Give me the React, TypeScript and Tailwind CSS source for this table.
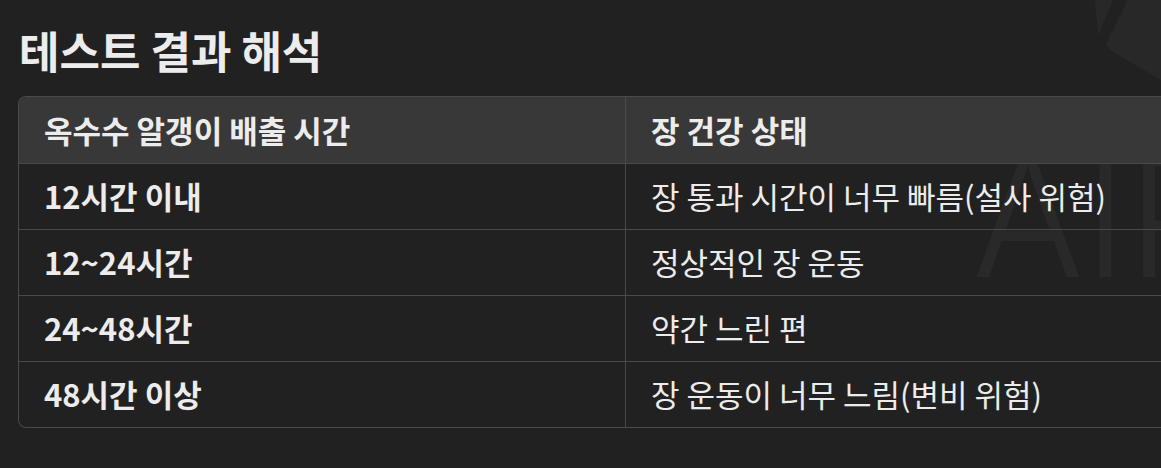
const rows = [
  ["12시간 이내", "장 통과 시간이 너무 빠름(설사 위험)"],
  ["12~24시간", "정상적인 장 운동"],
  ["24~48시간", "약간 느린 편"],
  ["48시간 이상", "장 운동이 너무 느림(변비 위험)"],
];

export default function App() {
  return (
    <div
      className="relative h-[468px] w-[1161px] overflow-hidden bg-[#212121] text-[#ececec]"
      style={{ fontFamily: '"Noto Sans CJK KR", "Noto Sans", sans-serif' }}
    >
      {/* watermark */}
      <div
        aria-hidden="true"
        className="pointer-events-none absolute left-[972px] top-[134px] select-none text-[166px] font-light leading-none text-white/[0.035]"
        style={{ fontFamily: 'Inter, "Liberation Sans", sans-serif' }}
      >
        AIP
      </div>
      <svg className="pointer-events-none absolute right-0 top-0" width="70" height="90" viewBox="0 0 70 90">
        <polygon points="4,0 22,0 7,36" fill="rgba(255,255,255,0.035)" />
        <polygon points="37,0 70,0 70,80 19,50 15,44" fill="rgba(255,255,255,0.035)" />
      </svg>

      <div className="relative pl-[18px] pt-[24px]">
        <h1 className="pl-[1px] text-[44px] font-bold leading-[52px]">테스트 결과 해석</h1>
        <table className="mt-[20px] w-[1240px] border-separate border-spacing-0 overflow-hidden rounded-tl-lg rounded-bl-lg border border-r-0 border-[#4a4a4a] text-[31px]">
          <thead>
            <tr className="bg-[#383838]">
              <th className="h-[66px] w-[607px] border-r border-[#4a4a4a] pl-[25px] text-left font-bold">옥수수 알갱이 배출 시간</th>
              <th className="h-[66px] pl-[25px] text-left font-bold">장 건강 상태</th>
            </tr>
          </thead>
          <tbody>
            {rows.map(([a, b]) => (
              <tr key={a}>
                <td className="h-[66px] border-r border-t border-[#4a4a4a] pl-[25px] font-bold">{a}</td>
                <td className="h-[66px] border-t border-[#4a4a4a] pl-[25px]">{b}</td>
              </tr>
            ))}
          </tbody>
        </table>
      </div>
    </div>
  );
}
